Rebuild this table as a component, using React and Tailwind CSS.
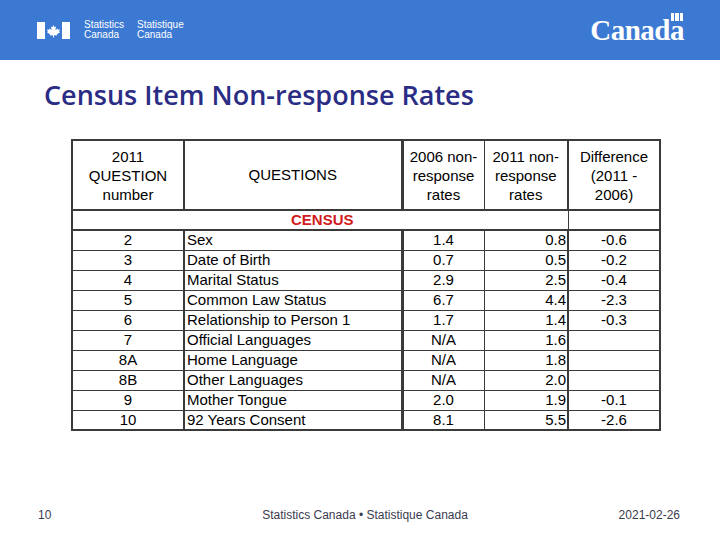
import React from 'react'

const rows = [
  ['2', 'Sex', '1.4', '0.8', '-0.6'],
  ['3', 'Date of Birth', '0.7', '0.5', '-0.2'],
  ['4', 'Marital Status', '2.9', '2.5', '-0.4'],
  ['5', 'Common Law Status', '6.7', '4.4', '-2.3'],
  ['6', 'Relationship to Person 1', '1.7', '1.4', '-0.3'],
  ['7', 'Official Languages', 'N/A', '1.6', ''],
  ['8A', 'Home Language', 'N/A', '1.8', ''],
  ['8B', 'Other Languages', 'N/A', '2.0', ''],
  ['9', 'Mother Tongue', '2.0', '1.9', '-0.1'],
  ['10', '92 Years Consent', '8.1', '5.5', '-2.6'],
]

function FlagSymbol() {
  return (
    <svg width="33" height="17" viewBox="0 0 33 17">
      <rect x="0" y="0" width="8" height="17" fill="#fff" />
      <rect x="25" y="0" width="8" height="17" fill="#fff" />
      <path
        d="M16.5 3 L17.6 5.2 L19 4.6 L18.5 8 L20.6 6.6 L21 7.8 L23 7.4 L22.2 9.6 L23 10.2 L19.8 12.6 L20.2 13.6 L17 13.2 L17 15.5 L16 15.5 L16 13.2 L12.8 13.6 L13.2 12.6 L10 10.2 L10.8 9.6 L10 7.4 L12 7.8 L12.4 6.6 L14.5 8 L14 4.6 L15.4 5.2 Z"
        fill="#fff"
      />
    </svg>
  )
}

function Wordmark() {
  return (
    <div className="relative font-['Liberation_Serif',serif] text-[29px] font-bold leading-none tracking-[-0.5px] text-white">
      Canada
      <span className="absolute right-[1px] top-[-3px] flex gap-[1px]">
        <span className="h-[8px] w-[3px] bg-white" />
        <span className="h-[8px] w-[4px] bg-white" />
        <span className="h-[8px] w-[3px] bg-white" />
      </span>
    </div>
  )
}

export default function App() {
  const cell = 'border-[#3a3a3a] text-[15px] leading-[18px]'
  return (
    <div className="flex h-[540px] w-[720px] flex-col bg-white font-['Liberation_Sans',Arial,sans-serif] text-black">
      <div className="flex h-[60px] items-center justify-between bg-[#3c79d3] pl-[37px] pr-[36px]">
        <div className="flex items-center">
          <FlagSymbol />
          <div className="ml-[14px] text-[10px] leading-[10px] text-white">
            <div>Statistics</div>
            <div>Canada</div>
          </div>
          <div className="ml-[13px] text-[10px] leading-[10px] text-white">
            <div>Statistique</div>
            <div>Canada</div>
          </div>
        </div>
        <Wordmark />
      </div>

      <h1 className="ml-[44px] mt-[16px] font-['Open_Sans',sans-serif] text-[27px] font-semibold leading-[38px] text-[#2b2d85]">
        Census Item Non-response Rates
      </h1>

      <div className="ml-[71px] mt-[25px]">
        <table className="w-[588px] table-fixed border-collapse border-2 border-[#3a3a3a]">
          <colgroup>
            <col className="w-[112px]" />
            <col className="w-[218px]" />
            <col className="w-[82px]" />
            <col className="w-[84px]" />
            <col className="w-[92px]" />
          </colgroup>
          <thead>
            <tr className="h-[70px]">
              <th className={`${cell} border-r-2 border-b-2 text-center font-normal leading-[19px]`}>
                2011<br />QUESTION<br />number
              </th>
              <th className={`${cell} border-r-[3px] border-b-2 text-center font-normal`}>QUESTIONS</th>
              <th className={`${cell} border-r border-b-2 text-center font-normal leading-[19px]`}>
                2006 non-<br />response<br />rates
              </th>
              <th className={`${cell} border-r-2 border-b-2 text-center font-normal leading-[19px]`}>
                2011 non-<br />response<br />rates
              </th>
              <th className={`${cell} border-b-2 text-center font-normal leading-[19px]`}>
                Difference<br />(2011 -<br />2006)
              </th>
            </tr>
          </thead>
          <tbody>
            <tr className="h-[18px]">
              <td colSpan={4} className={`${cell} border-r border-b-2 text-[14px] font-bold`}>
                <span className="block pl-[218px] text-[#d01c1c]">CENSUS</span>
              </td>
              <td className={`${cell} border-b-2`} />
            </tr>
            {rows.map((r, i) => {
              const b = i < rows.length - 1 ? 'border-b' : ''
              return (
                <tr key={r[0]} className="h-[20px]">
                  <td className={`${cell} border-r-2 ${b} text-center`}>{r[0]}</td>
                  <td className={`${cell} border-r-[3px] ${b} pl-[2px] text-left`}>{r[1]}</td>
                  <td className={`${cell} border-r ${b} text-center`}>{r[2]}</td>
                  <td className={`${cell} border-r-2 ${b} pr-[1px] text-right`}>{r[3]}</td>
                  <td className={`${cell} ${b} text-center`}>{r[4]}</td>
                </tr>
              )
            })}
          </tbody>
        </table>
      </div>

      <div className="mt-auto mb-[18px] flex items-center justify-between pl-[38px] pr-[40px] text-[12px] leading-[14px] text-[#3b3b4f]">
        <span className="w-[100px]">10</span>
        <span className="ml-[12px]">Statistics Canada • Statistique Canada</span>
        <span className="w-[100px] text-right">2021-02-26</span>
      </div>
    </div>
  )
}
